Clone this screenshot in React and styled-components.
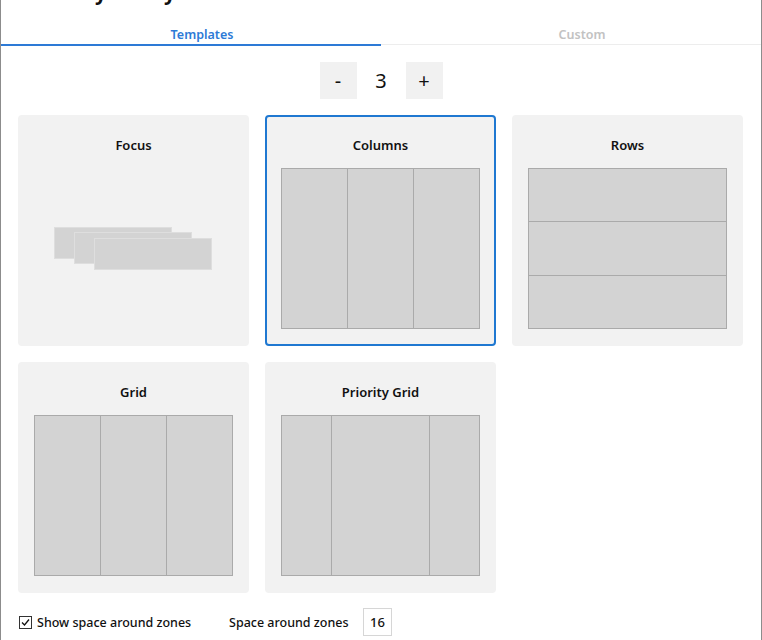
import React from 'react';
import styled, { createGlobalStyle } from 'styled-components';

const GlobalStyle = createGlobalStyle`
  html, body {
    margin: 0;
    padding: 0;
    background: #ffffff;
    font-family: "Noto Sans", "Open Sans", Arial, sans-serif;
  }
`;

const Window = styled.div`
  width: 762px;
  height: 640px;
  box-sizing: border-box;
  border-left: 1px solid #8c8c8c;
  border-right: 1px solid #8c8c8c;
  overflow: hidden;
  display: flex;
  flex-direction: column;
`;

const Title = styled.h1`
  margin: -20px 0 0 16px;
  font-size: 20px;
  font-weight: 700;
  line-height: 26px;
  color: #111;
`;

const TabBar = styled.div`
  display: flex;
  margin-top: 17px;
`;

const Tab = styled.div`
  flex: 1;
  text-align: center;
  padding-left: 22px;
  font-size: 12.5px;
  font-weight: 600;
  line-height: 24px;
  color: ${p => (p.active ? '#2d7ad6' : '#c2c2c2')};
  border-bottom: ${p => (p.active ? '2px solid #2d7ad6' : '1px solid #ededed')};
  box-sizing: border-box;
  height: ${p => (p.active ? '23px' : '22px')};
  align-self: flex-start;
`;

const Counter = styled.div`
  display: flex;
  justify-content: center;
  align-items: center;
  margin-top: 16px;
`;

const StepButton = styled.div`
  width: 37px;
  height: 37px;
  background: #f1f1f1;
  display: flex;
  align-items: center;
  justify-content: center;
  font-size: 20px;
  color: #111;
`;

const Count = styled.div`
  width: 49px;
  text-align: center;
  font-size: 20px;
  color: #111;
`;

const CardGrid = styled.div`
  display: grid;
  grid-template-columns: repeat(3, 231px);
  grid-auto-rows: 231px;
  gap: 16px;
  margin: 16px 0 0 17px;
`;

const Card = styled.div`
  background: #f2f2f2;
  border-radius: 4px;
  box-sizing: border-box;
  border: ${p => (p.selected ? '2px solid #1f78d1' : '2px solid transparent')};
  padding: 18px 14px 0;
  display: flex;
  flex-direction: column;
`;

const CardTitle = styled.div`
  text-align: center;
  font-size: 13px;
  font-weight: 600;
  color: #111;
  height: 20px;
  line-height: 20px;
`;

const Preview = styled.div`
  margin-top: 13px;
  height: 161px;
  display: flex;
  flex-direction: ${p => (p.rows ? 'column' : 'row')};
  border: 1px solid #aaaaaa;
  box-sizing: border-box;
  background: #aaaaaa;
  gap: 1px;
`;

const Zone = styled.div`
  flex: ${p => p.grow || 1};
  background: #d3d3d3;
`;

const FocusArea = styled.div`
  margin-top: 13px;
  height: 161px;
  position: relative;
`;

const FocusZone = styled.div`
  position: absolute;
  width: 118px;
  height: 32px;
  box-sizing: border-box;
  background: #d3d3d3;
  border: 1px solid #dedede;
`;

const Footer = styled.div`
  display: flex;
  align-items: center;
  margin: 15px 0 0 18px;
  font-size: 12.5px;
  font-weight: 500;
  color: #111;
`;

const CheckLabel = styled.label`
  display: flex;
  align-items: center;
  gap: 5px;
  width: 210px;
`;

const CheckBox = styled.span`
  width: 11px;
  height: 11px;
  border: 1px solid #333;
  display: flex;
  align-items: center;
  justify-content: center;
  background: #fff;
`;

const SpaceLabel = styled.span`
  width: 134px;
`;

const NumberBox = styled.div`
  width: 29px;
  height: 28px;
  box-sizing: border-box;
  border: 1px solid #d6d6d6;
  display: flex;
  align-items: center;
  justify-content: center;
  font-size: 13px;
`;

const focusOffsets = [
  { left: 20, top: 59 },
  { left: 40, top: 64 },
  { left: 60, top: 70 },
];

const layouts = [
  { name: 'Focus', kind: 'focus' },
  { name: 'Columns', kind: 'cols', zones: [1, 1, 1], selected: true },
  { name: 'Rows', kind: 'rows', zones: [1, 1, 1] },
  { name: 'Grid', kind: 'cols', zones: [1, 1, 1] },
  { name: 'Priority Grid', kind: 'cols', zones: [1, 2, 1] },
];

const App = () => {
  return (
    <>
      <GlobalStyle />
      <Window>
        <Title>Choose your layout</Title>
        <TabBar>
          <Tab active>Templates</Tab>
          <Tab>Custom</Tab>
        </TabBar>
        <Counter>
          <StepButton>-</StepButton>
          <Count>3</Count>
          <StepButton>+</StepButton>
        </Counter>
        <CardGrid>
          {layouts.map(l => (
            <Card key={l.name} selected={l.selected}>
              <CardTitle>{l.name}</CardTitle>
              {l.kind === 'focus' ? (
                <FocusArea>
                  {focusOffsets.map((o, i) => (
                    <FocusZone key={i} style={{ left: o.left, top: o.top }} />
                  ))}
                </FocusArea>
              ) : (
                <Preview rows={l.kind === 'rows'}>
                  {l.zones.map((g, i) => (
                    <Zone key={i} grow={g} />
                  ))}
                </Preview>
              )}
            </Card>
          ))}
        </CardGrid>
        <Footer>
          <CheckLabel>
            <CheckBox>
              <svg width="9" height="9" viewBox="0 0 9 9">
                <path d="M1 4.5 L3.5 7 L8 1.5" fill="none" stroke="#111" strokeWidth="1.3" />
              </svg>
            </CheckBox>
            Show space around zones
          </CheckLabel>
          <SpaceLabel>Space around zones</SpaceLabel>
          <NumberBox>16</NumberBox>
        </Footer>
      </Window>
    </>
  );
};

export default App;
